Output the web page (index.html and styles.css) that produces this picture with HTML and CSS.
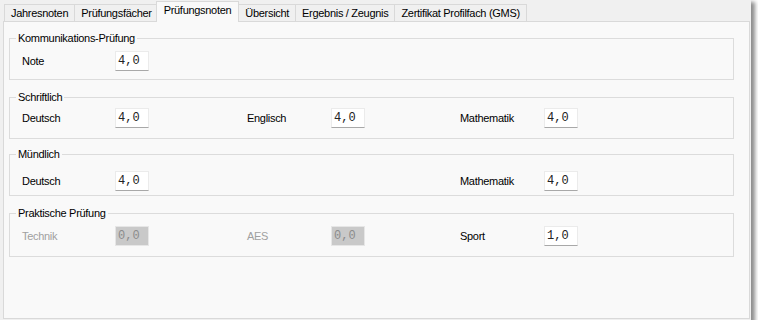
FILE: index.html
```html
<!DOCTYPE html>
<html lang="de">
<head>
    <meta charset="UTF-8">
    <meta name="viewport" content="width=device-width, initial-scale=1.0">
    <title>Prüfungsnoten</title>
    <link rel="stylesheet" href="styles.css">
</head>

<body>
    <div class="window">
        <div class="tabs">
            <div class="tab">Jahresnoten</div>
            <div class="tab">Prüfungsfächer</div>
            <div class="tab active">Prüfungsnoten</div>
            <div class="tab">Übersicht</div>
            <div class="tab">Ergebnis / Zeugnis</div>
            <div class="tab">Zertifikat Profilfach (GMS)</div>
        </div>

        <div class="panel">
            <fieldset class="group group-1">
                <legend>Kommunikations-Prüfung</legend>
                <div class="row">
                    <span class="label">Note</span>
                    <span class="field">4,0</span>
                </div>
            </fieldset>

            <fieldset class="group group-2">
                <legend>Schriftlich</legend>
                <div class="row">
                    <span class="label">Deutsch</span>
                    <span class="field">4,0</span>
                    <span class="label col-2">Englisch</span>
                    <span class="field">4,0</span>
                    <span class="label col-3">Mathematik</span>
                    <span class="field">4,0</span>
                </div>
            </fieldset>

            <fieldset class="group group-3">
                <legend>Mündlich</legend>
                <div class="row">
                    <span class="label">Deutsch</span>
                    <span class="field">4,0</span>
                    <span class="label col-3">Mathematik</span>
                    <span class="field">4,0</span>
                </div>
            </fieldset>

            <fieldset class="group group-4">
                <legend>Praktische Prüfung</legend>
                <div class="row">
                    <span class="label disabled">Technik</span>
                    <span class="field disabled">0,0</span>
                    <span class="label col-2 disabled">AES</span>
                    <span class="field disabled">0,0</span>
                    <span class="label col-3">Sport</span>
                    <span class="field">1,0</span>
                </div>
            </fieldset>
        </div>
    </div>
</body>
</html>
```

FILE: styles.css
```css
html, body {
    margin: 0;
    padding: 0;
}

body {
    background-color: #fff;
    font-family: "Liberation Sans", Arial, sans-serif;
    font-size: 11px;
    letter-spacing: -0.3px;
    color: #000;
}

.window {
    width: 751px;
    height: 320px;
    background-color: #f0f0f0;
    box-shadow: 3px 3px 4px 1px rgba(0, 0, 0, 0.45);
    display: flex;
    flex-direction: column;
}

/* tab strip */
.tabs {
    display: flex;
    align-items: flex-end;
    height: 21px;
    padding-left: 4px;
}

.tab {
    height: 16px;
    line-height: 16px;
    padding: 0 6px;
    margin-right: -1px;
    border: 1px solid #d9d9d9;
    border-bottom: none;
    background-color: #f0f0f0;
    white-space: nowrap;
}

.tab.active {
    position: relative;
    z-index: 1;
    height: 20px;
    line-height: 17px;
    margin: 0 -1px -1px -2px;
    padding: 0 7px;
    background-color: #f9f9f9;
}

/* content area */
.panel {
    flex: 1;
    margin-left: 3px;
    margin-right: 1px;
    margin-bottom: 1px;
    padding: 9px 15px 0 5px;
    background-color: #f9f9f9;
    border: 1px solid #d9d9d9;
}

.group {
    margin: 0;
    padding: 0 0 0 12px;
    border: 1px solid #dcdcdc;
    min-width: 0;
}

.group legend {
    margin-left: -6px;
    padding: 0 2px;
    line-height: 14px;
}

.group-1 .row { padding: 6px 0 8px; }
.group-2 { margin-top: 10px; }
.group-2 .row { padding: 4px 0 10px; }
.group-3 { margin-top: 8px; }
.group-3 .row { padding: 10px 0 4px; }
.group-4 { margin-top: 10px; }
.group-4 .row { padding: 6px 0 10px; }

.row {
    display: grid;
    grid-template-columns: 93px 34px 98px 84px 34px 95px 84px 34px;
    align-items: center;
}

.label.col-2 { grid-column: 4; }
.label.col-3 { grid-column: 7; }

.label.disabled {
    color: #a0a0a0;
}

.field {
    box-sizing: border-box;
    height: 20px;
    line-height: 18px;
    padding-left: 2px;
    font-family: "Liberation Mono", "Courier New", monospace;
    font-size: 12px;
    letter-spacing: 0;
    color: #222;
    background-color: #fff;
    border: 1px solid #ebebeb;
    border-bottom-color: #a8a8a8;
}

.field.disabled {
    background-color: #c9c9c9;
    color: #8c8c8c;
    border-color: #e6e6e6;
}
```
